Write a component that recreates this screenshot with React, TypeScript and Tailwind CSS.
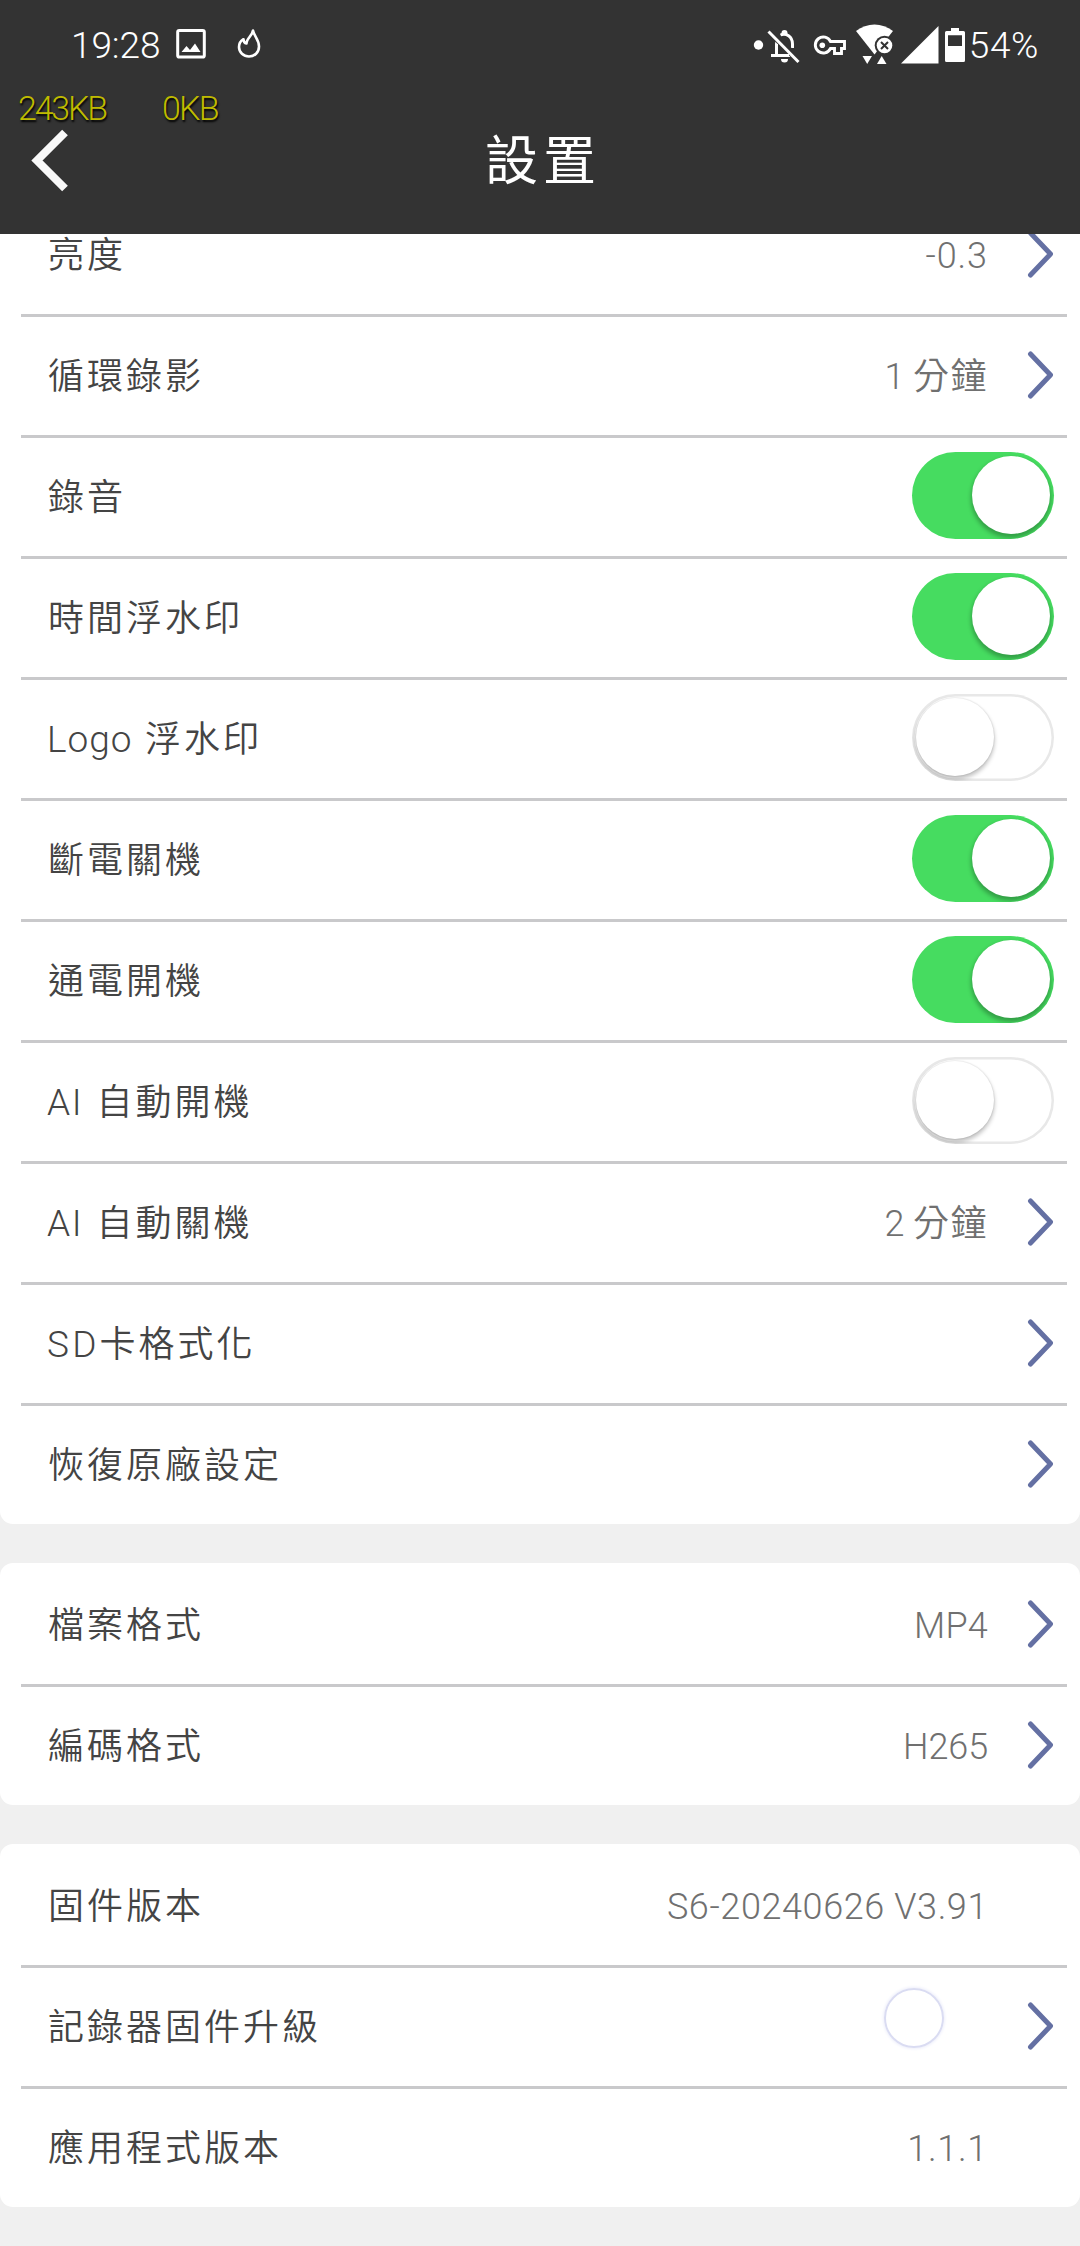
import React, { useState } from "react";

type Row = {
  label: string;
  labelSpacing?: string;
  value?: string;
  valueSpacing?: string;
  kind: "link" | "toggle" | "text" | "loading";
  on?: boolean;
};

const recording: Row[] = [
  { label: "亮度", value: "-0.3", valueSpacing: "tracking-[0.9px]", kind: "link" },
  { label: "循環錄影", value: "1 分鐘", kind: "link" },
  { label: "錄音", kind: "toggle", on: true },
  { label: "時間浮水印", kind: "toggle", on: true },
  { label: "Logo 浮水印", labelSpacing: "tracking-[1px] [word-spacing:2.5px]", kind: "toggle", on: false },
  { label: "斷電關機", kind: "toggle", on: true },
  { label: "通電開機", kind: "toggle", on: true },
  { label: "AI 自動開機", kind: "toggle", on: false },
  { label: "AI 自動關機", value: "2 分鐘", kind: "link" },
  { label: "SD卡格式化", labelSpacing: "tracking-[3.2px]", kind: "link" },
  { label: "恢復原廠設定", kind: "link" },
];

const formats: Row[] = [
  { label: "檔案格式", value: "MP4", valueSpacing: "tracking-[0.2px]", kind: "link" },
  { label: "編碼格式", value: "H265", kind: "link" },
];

const versions: Row[] = [
  { label: "固件版本", value: "S6-20240626 V3.91", valueSpacing: "tracking-[0.6px]", kind: "text" },
  { label: "記錄器固件升級", kind: "loading" },
  { label: "應用程式版本", value: "1.1.1", valueSpacing: "tracking-[0.7px]", kind: "text" },
];

const fontStack = "font-['Roboto','Noto_Sans_CJK_TC',sans-serif]";

// Splits mixed text so that Chinese and Latin runs can be spaced separately.
function Mixed({ text, cjk, latin }: { text: string; cjk: string; latin: string }) {
  const runs = text.match(/[\u4e00-\u9fff]+|[^\u4e00-\u9fff]+/g) ?? [];
  return (
    <>
      {runs.map((run, i) => (
        <span key={i} className={/[\u4e00-\u9fff]/.test(run) ? cjk : latin}>
          {run}
        </span>
      ))}
    </>
  );
}

function Chevron() {
  return (
    <svg className="-mr-px h-[48px] w-[28px] shrink-0" viewBox="0 0 28 48" fill="none">
      <path d="M3.5 3 23.5 24 3.5 45" stroke="#6470a3" strokeWidth="5" strokeLinecap="round" strokeLinejoin="round" />
    </svg>
  );
}

function Toggle({ initial }: { initial: boolean }) {
  const [on, setOn] = useState(initial);
  return (
    <button
      type="button"
      role="switch"
      aria-checked={on}
      onClick={() => setOn(!on)}
      className={
        "mb-[2px] flex h-[87px] w-[142px] shrink-0 items-center overflow-hidden rounded-full px-[4px] " +
        (on ? "justify-end bg-[#46dc60]" : "justify-start bg-white shadow-[inset_0_0_0_2.5px_#e8e8e8]")
      }
    >
      <span
        className={
          "size-[78px] rounded-full bg-white " +
          (on
            ? "shadow-[0_3px_4px_1px_rgba(0,0,0,0.28)]"
            : "shadow-[0_3px_4px_0.5px_rgba(0,0,0,0.24),0_0_1px_1px_rgba(0,0,0,0.05)]")
        }
      />
    </button>
  );
}

function SettingRow({ row }: { row: Row }) {
  return (
    <div className="flex h-[118px] items-center pr-[26px] pb-[2px] pl-[48px]">
      <span className="flex-1 pt-[3px] text-[36px] leading-[54px] font-[350] whitespace-pre text-[#444444]">
        <Mixed
          text={row.label}
          cjk="tracking-[3px]"
          latin={"-ml-px text-[37px] " + (row.labelSpacing ?? "tracking-[1.5px] [word-spacing:3px]")}
        />
      </span>
      {row.value && (
        <span
          className={
            "pt-[3px] text-[36px] leading-[54px] font-[350] whitespace-pre text-[#707070] " +
            (row.kind === "text" ? "mr-[66px]" : "mr-[39px]")
          }
        >
          <Mixed text={row.value} cjk="tracking-[1.5px]" latin={row.valueSpacing ?? "tracking-[-0.1px]"} />
        </span>
      )}
      {row.kind === "loading" && (
        <span className="mr-[83px] mb-[17px] size-[60px] rounded-full border-2 border-[#dadcf2] shadow-[0_0_3px_1px_#eeeffb]" />
      )}
      {row.kind === "toggle" && <Toggle initial={!!row.on} />}
      {(row.kind === "link" || row.kind === "loading") && <Chevron />}
    </div>
  );
}

function Group({ rows, className }: { rows: Row[]; className: string }) {
  return (
    <section className={"bg-white " + className}>
      {rows.map((row, i) => (
        <React.Fragment key={row.label}>
          {i > 0 && <div className="mr-[13px] ml-[21px] h-[3px] bg-[#c9c9cb]" />}
          <SettingRow row={row} />
        </React.Fragment>
      ))}
    </section>
  );
}

function LeftStatusIcons() {
  return (
    <svg className="ml-[15px] h-[40px] w-[90px]" viewBox="174 24 90 40" fill="none">
      <rect x="176.7" y="30.5" width="26.6" height="26.6" rx="1.6" stroke="#fff" strokeWidth="3" />
      <path d="M180.5 52 185.5 46 189 50 194 43.5 199.5 52Z" fill="#fff" />
      <path
        d="M252 30.5C251.5 35.5 245.5 38.5 245.5 43.5C242.8 43 242.5 41 242.5 39.2C239.5 41 238 44 238 47C238 52.5 242.5 56.5 248 56.5C253.5 56.5 258 52.5 258 46.5C258 39.5 253.5 37 252 30.5Z"
        stroke="#fff"
        strokeWidth="2.6"
        strokeLinejoin="round"
      />
    </svg>
  );
}

function RightStatusIcons() {
  return (
    <svg className="h-[44px] w-[214px]" viewBox="752 20 214 44" fill="none">
      <circle cx="757.5" cy="43" r="4.7" fill="#fff" />
      {/* muted bell */}
      <path d="M770 53.5H795" stroke="#fff" strokeWidth="3" />
      <path d="M775.5 53V42C775.5 39.5 776.2 37.5 777 36.5" stroke="#fff" strokeWidth="3" />
      <path d="M779.5 33C785 30.5 791.5 34.5 791.5 42V46" stroke="#fff" strokeWidth="3" />
      <path d="M780.5 33V31A3 3 0 0 1 786.5 31V33Z" fill="#fff" />
      <path d="M780 57H787A3.5 3.5 0 0 1 780 57Z" fill="#fff" />
      <path d="M768 28.5 799 59.5" stroke="#333" strokeWidth="7" />
      <path d="M770 53.5H788M775.5 53V42" stroke="#fff" strokeWidth="3" />
      <path d="M767.5 29.5 797.5 60" stroke="#fff" strokeWidth="3" />
      {/* key */}
      <path
        d="M829.5 39.5H843.5V46.5H840.5V51.5H833.5V46.5H829.5A8 8 0 1 1 829.5 39.5Z"
        stroke="#fff"
        strokeWidth="2.9"
      />
      <circle cx="821.3" cy="43.3" r="2.8" fill="#fff" />
      {/* wifi without connection */}
      <path d="M855 29C866 20.3 881 20.3 892 29L873.5 52.5Z" fill="#fff" />
      <circle cx="883.5" cy="43.5" r="9.8" fill="#333" />
      <circle cx="883.5" cy="43.5" r="7.8" fill="#fff" />
      <path d="M880 40 887 47M887 40 880 47" stroke="#333" strokeWidth="2" />
      <path d="M861.5 54H871L866.2 62Z" fill="#fff" />
      <path d="M876 62H885.5L880.7 54Z" fill="#fff" />
      {/* mobile signal */}
      <path d="M900 61.5 937.5 24V61.5Z" fill="#fff" />
      {/* battery */}
      <path
        fillRule="evenodd"
        d="M950 26H958V29H962.5Q964 29 964 30.5V58.5Q964 60 962.5 60H945.5Q944 60 944 58.5V30.5Q944 29 945.5 29H950ZM947 33.3V44H961V33.3Z"
        fill="#fff"
      />
    </svg>
  );
}

export default function App() {
  return (
    <main className={"flex h-[2246px] w-[1080px] flex-col overflow-hidden bg-[#f0f0f0] " + fontStack}>
      <header className="flex h-[234px] shrink-0 flex-col bg-[#333333]">
        <div className="flex h-[88px] items-center pr-[41px] pl-[71px] text-white">
          <span className="pt-[3px] text-[37px] leading-[44px] font-[350] tracking-[-0.1px]">19:28</span>
          <LeftStatusIcons />
          <span className="flex-1" />
          <RightStatusIcons />
          <span className="ml-[2px] pt-[3px] text-[37px] leading-[44px] font-[350] tracking-[0.6px]">54%</span>
        </div>
        <div className="flex h-[40px] items-center gap-[56px] pl-[18px] text-[34px] leading-[40px] font-light text-[#bfbb00] [text-shadow:1px_2px_2px_#000]">
          <span className="tracking-[-2.2px]">243KB</span>
          <span className="tracking-[-1.8px]">0KB</span>
        </div>
        <div className="flex h-[64px] items-center">
          <svg className="ml-[30px] h-[64px] w-[40px] shrink-0" viewBox="30 128 40 64" fill="none">
            <path d="M65 132.5 37 160.5 65 188.5" stroke="#f9f9f9" strokeWidth="8" />
          </svg>
          <h1 className="flex-1 pt-[4px] pr-[64px] text-center text-[53px] leading-[64px] font-normal tracking-[5px] text-white">
            設置
          </h1>
        </div>
      </header>
      <div className="flex min-h-0 flex-1 flex-col gap-[39px] overflow-hidden">
        <Group rows={recording} className="-mt-[38px] rounded-b-[13px]" />
        <Group rows={formats} className="rounded-[13px] pt-[3px]" />
        <Group rows={versions} className="rounded-[13px] pt-[3px]" />
      </div>
    </main>
  );
}
